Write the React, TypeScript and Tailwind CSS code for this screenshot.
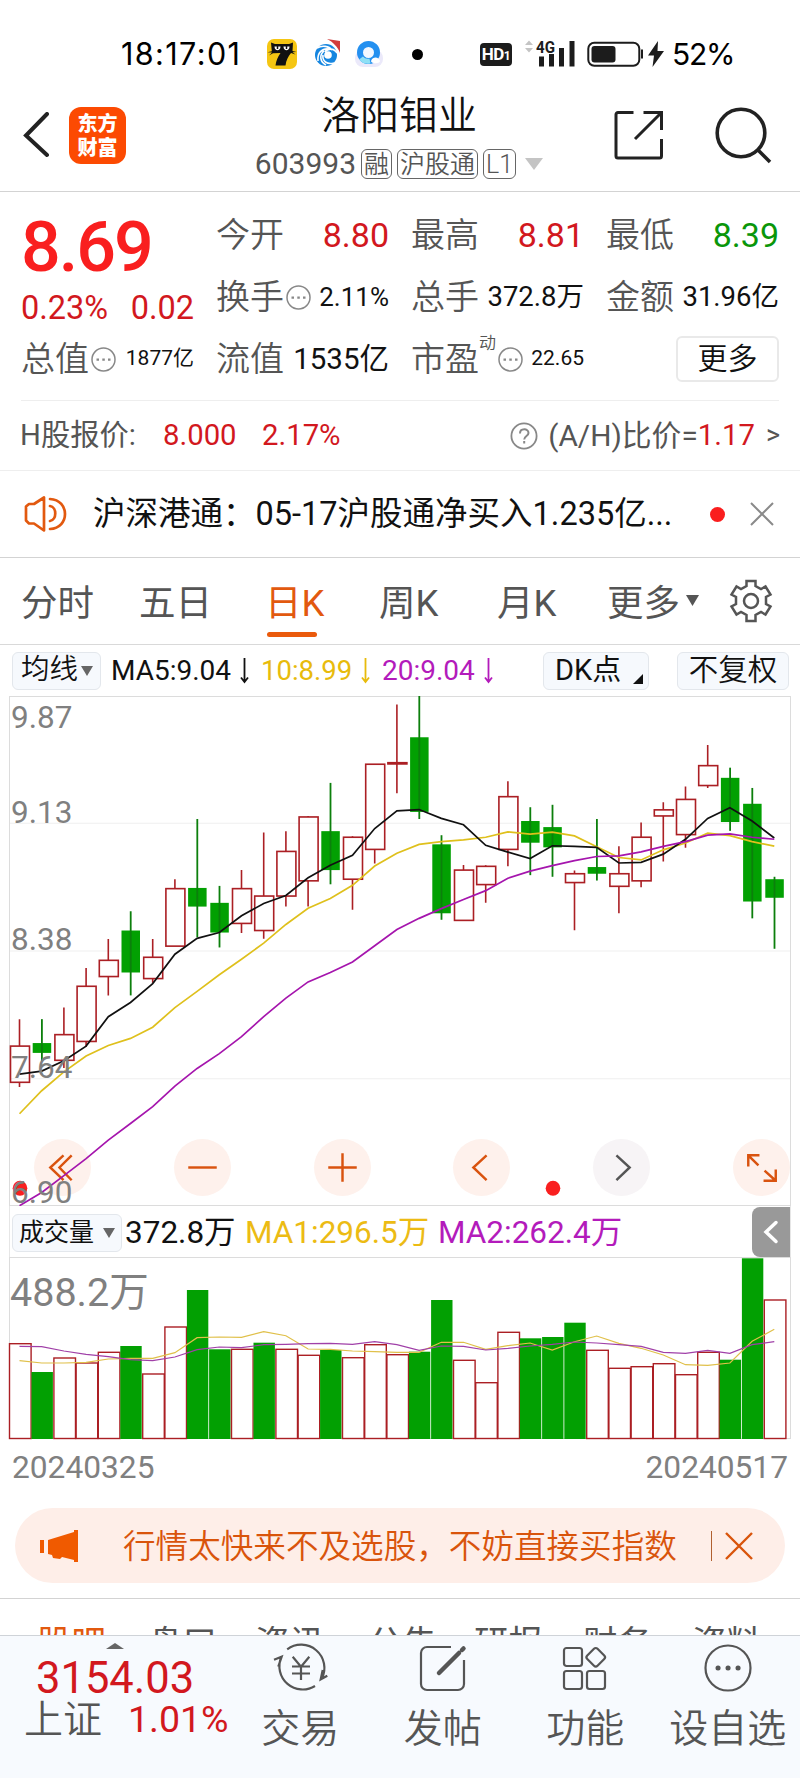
import type { ReactNode } from 'react'

interface Candle {
  up: boolean
  top: number
  bottom: number
  high: number
  low: number
}

const STEP = 22.2
const centerX = (i: number) => 19.5 + STEP * i

const c = (up: boolean, top: number, bottom: number, high: number, low: number): Candle => ({
  up,
  top,
  bottom,
  high,
  low,
})

const candles: Candle[] = [
  c(true, 1041.3, 1077, 1014.7, 1081.7),
  c(false, 1038.3, 1048, 1014.7, 1056),
  c(true, 1030, 1055.3, 1003.3, 1063),
  c(true, 982.3, 1036.7, 964.3, 1042),
  c(true, 956.7, 972.7, 935.7, 991.3),
  c(false, 927.3, 968.7, 908.3, 991.3),
  c(true, 953.7, 974.7, 935.7, 978.7),
  c(true, 886, 942.7, 876.7, 942.7),
  c(false, 885.3, 903.7, 817.3, 934),
  c(false, 900, 929.3, 883.3, 944),
  c(true, 886, 920.3, 867.7, 929.7),
  c(true, 893.3, 927.3, 830.7, 935.3),
  c(true, 849.3, 893.3, 829.3, 903.7),
  c(true, 815.3, 878.3, 814.3, 903.7),
  c(false, 829.3, 867.7, 781.7, 881.7),
  c(true, 835.3, 876.7, 834.3, 906.7),
  c(true, 763.3, 847.3, 763, 861.3),
  c(true, 761.8, 763, 704.3, 792),
  c(false, 736.7, 810.3, 696, 817.3),
  c(false, 842.3, 910.3, 833.3, 916.7),
  c(true, 867.7, 917.3, 862.7, 917.3),
  c(true, 864, 882, 863, 900),
  c(true, 795.3, 847.3, 780, 864),
  c(false, 819.3, 840.7, 805.7, 872.7),
  c(false, 825.3, 845.3, 803.3, 874.3),
  c(true, 871.3, 880, 868, 927),
  c(false, 864.7, 871.3, 817.3, 878),
  c(true, 871.3, 883.7, 844.3, 910.3),
  c(true, 835.3, 878.3, 820.7, 884.7),
  c(true, 808.3, 814.3, 800.7, 859.3),
  c(true, 798, 832.7, 785.3, 845.7),
  c(true, 764.7, 784.3, 744.3, 786.7),
  c(false, 776.7, 820.3, 766.7, 829),
  c(false, 802.3, 898.7, 786.7, 915.3),
  c(false, 876.7, 895, 874.3, 945.3),
]

const ma5 = [
  1069, 1066, 1055.7, 1041.3, 1012.3, 998.3, 979.7, 950.7, 935, 929.3, 912.7, 900.7, 892.7, 875.3,
  863, 853, 826.7, 809.3, 808, 816.7, 823, 843.3, 850, 856.3, 843.7, 844.3, 845.3, 860.7, 860, 852,
  837.3, 816.7, 806.3, 819.3, 836,
]
const ma10 = [
  1108, 1085.3, 1066.7, 1051, 1040.7, 1033.7, 1022.7, 1003.3, 987.3, 971, 955.7, 939.7, 921.3,
  905.3, 895.7, 882.7, 863.7, 851, 842.3, 839.7, 838, 835.3, 830, 832.3, 830.3, 834, 844.7, 855.3,
  857.7, 847.7, 841, 831.3, 833.7, 839.7, 844,
]
const ma20 = [
  1198.7, 1185.7, 1169, 1152.3, 1134, 1117.7, 1101, 1080.7, 1063.3, 1048.7, 1032, 1012.3, 994, 978,
  968.7, 958.3, 942.3, 926.3, 915.3, 905.7, 896.7, 888, 875.7, 868.7, 863.3, 858.3, 854.3, 853.7,
  849.7, 844.3, 839.7, 833.3, 832, 835.3, 837.3,
]

const volumes = [
  1343.7, 1372, 1358, 1363, 1352.3, 1346, 1374, 1327, 1290, 1349.3, 1349.3, 1342.7, 1349.3, 1355.3,
  1350, 1357.7, 1344.7, 1354.7, 1351.7, 1300, 1360.3, 1382.7, 1332.3, 1338.3, 1337, 1322.7, 1350.3,
  1368.3, 1366.7, 1363.7, 1374.7, 1352.3, 1359.7, 1258.3, 1300,
]
const volumeDown = [1, 5, 8, 9, 11, 14, 18, 19, 23, 24, 25, 32, 33]
const volMa1 = [
  1360.7, 1363, 1363, 1362.3, 1359, 1358.3, 1358.3, 1352.7, 1337.7, 1337, 1337.3, 1331.7, 1335.7,
  1349, 1349.3, 1351, 1351.7, 1352.3, 1352.3, 1342.3, 1342.3, 1349.3, 1345.7, 1343, 1350, 1341.7,
  1336, 1343.3, 1348.3, 1355, 1364.7, 1365.3, 1363, 1341.3, 1329.3,
]
const volMa2 = [
  1346.3, 1346.7, 1351, 1354.3, 1356.7, 1359.7, 1360.7, 1357, 1349.7, 1347, 1347.7, 1344.7, 1344.3,
  1343.7, 1343.3, 1344.3, 1341.7, 1344.7, 1350.3, 1346, 1346.3, 1350, 1348.3, 1346, 1344.3, 1342,
  1343, 1344.7, 1346.3, 1352.3, 1353.3, 1350.3, 1353.3, 1344.7, 1341.7,
]

const toPoints = (ys: number[]) => ys.map((y, i) => `${centerX(i).toFixed(1)},${y}`).join(' ')

function StatusBar() {
  return (
    <div className="flex h-[84px] items-center pt-6 pl-[121px] font-['Inter',sans-serif] text-black">
      <span className="w-[146px] text-[30.500px] leading-none tracking-[1.400px]">18:17:01</span>
      <svg className="h-[30px] w-[30px]" viewBox="0 0 30 30">
        <rect width="30" height="30" rx="7" fill="#f5c613" />
        <path
          d="M4 3.500 8 5h14l4-1.500-.5 8.500 4 1-4 .3 3 2.200-4.500-1.500c-3 4-4.800 7-5.500 12.500H8.500c.7-5 2.200-8.500 5-12.500L6 14.300l-4 2.200 3-3-4.500-.3 4.300-1z"
          fill="#111"
        />
        <path d="M7.500 7.500c0 5 6 5 6 0M16.500 7.500c0 5 6 5 6 0" fill="#fff" />
        <path d="M10.500 6v4M19.500 6v4" stroke="#111" strokeWidth="1.500" />
      </svg>
      <svg className="ml-4 h-[30px] w-[30px]" viewBox="0 0 30 30">
        <circle cx="13" cy="16" r="11" fill="#1686e0" />
        <path
          d="M4 9c5-3 12-2 15 2M5 22c-1-8 4-13 11-12M13 26c-6-3-7-10-2-14M21 24c-7 2-12-2-11-8M24 14c-3-5-9-5-12-1"
          fill="none"
          stroke="#fff"
          strokeWidth="1.600"
        />
        <circle cx="15" cy="16" r="3.800" fill="#fff" />
        <path d="m14 0 13 2v12C25 8 20 3 14 0z" fill="#d23b3b" />
      </svg>
      <svg className="ml-[11px] h-[30px] w-[30px]" viewBox="0 0 30 30">
        <rect x="1" y="11" width="28" height="17" rx="8" fill="#ebe9fa" />
        <circle cx="14.500" cy="13.500" r="8.500" fill="#f4f8ff" stroke="#2490f0" strokeWidth="6" />
        <path d="M7 19a9 9 0 0 0 9 3" stroke="#8fe0f5" strokeWidth="5" fill="none" />
        <path d="M17 22c2-5 8-4 9 0 0 3-9 3-9 0z" fill="#fff" />
      </svg>
      <span className="ml-[28px] h-[11px] w-[11px] rounded-full bg-black" />
      <span className="ml-[57px] flex h-[23px] w-8 items-center justify-center rounded bg-[#1c1c1c] font-['Roboto',sans-serif] text-[17px] leading-none font-bold tracking-[-0.5px] text-white">
        HD<span className="pt-1 text-[12px]">1</span>
      </span>
      <svg className="ml-[13px] h-[30px] w-[50px]" viewBox="0 0 50 30">
        <path d="m0 6 4-4.500L8 6zM0 9l4 4.500L8 9z" fill="#c4c4c4" />
        <text
          x="11"
          y="13.500"
          fontFamily="Roboto, sans-serif"
          fontSize="16"
          fontWeight="700"
          textLength="19"
          lengthAdjust="spacingAndGlyphs"
          fill="#1c1c1c"
        >
          4G
        </text>
        <path d="M14 17.500h5v10h-5zM24 15h5v12.500h-5zM34 9h5v18.500h-5zM44.500 2h5v25.500h-5z" fill="#1c1c1c" />
      </svg>
      <svg className="ml-3 h-[28px] w-[57px]" viewBox="0 0 57 28">
        <rect x="1.300" y="2.800" width="51" height="23" rx="6" fill="none" stroke="#1c1c1c" strokeWidth="2" />
        <rect x="4.500" y="6" width="24" height="16.500" rx="3" fill="#1c1c1c" />
        <path d="M55 9.500v9" stroke="#1c1c1c" strokeWidth="2" />
      </svg>
      <svg className="ml-1 h-[26px] w-[16px]" viewBox="0 0 16 26">
        <path d="M10 0 0 14.500h6L4.500 26 16 10H9.500z" fill="#1c1c1c" />
      </svg>
      <span className="ml-2 text-[30px] leading-none tracking-[-1.300px]">52%</span>
    </div>
  )
}

function Tag({ children }: { children: ReactNode }) {
  return (
    <span className="flex h-[30px] items-center rounded-md border border-[#666] px-[2px] text-[25px] leading-none font-[350] text-[#555]">
      {children}
    </span>
  )
}

function Header() {
  return (
    <div className="flex h-[108px] border-b border-[#d3d3d3] pl-[23px]">
      <svg className="mt-[28px] h-[46px] w-[26px]" viewBox="0 0 26 46">
        <path d="M24 2 3 23.500 24 43" fill="none" stroke="#222" strokeWidth="4" strokeLinecap="round" />
      </svg>
      <div className="mt-[23px] ml-5 flex h-[57px] w-[57px] flex-col items-center justify-center rounded-xl bg-[#fc4a02] text-[20px] leading-[24px] font-black text-white">
        <span>东方</span>
        <span>财富</span>
      </div>
      <div className="flex w-[488px] flex-col items-center pl-[58px]">
        <h1 className="mt-[9px] text-[39px] leading-[46px] font-[350] text-[#111]">洛阳钼业</h1>
        <div className="mt-[10px] flex items-center gap-[5px]">
          <span className="text-[30px] leading-none text-[#555]">603993</span>
          <Tag>融</Tag>
          <Tag>沪股通</Tag>
          <Tag>L1</Tag>
          <svg className="ml-1 h-[12px] w-[18px]" viewBox="0 0 18 12">
            <path d="M0 0h18L9 12z" fill="#c4c4c4" />
          </svg>
        </div>
      </div>
      <svg className="mt-[26px] h-[50px] w-[50px]" viewBox="0 0 50 50" fill="none" stroke="#222" strokeWidth="3">
        <path d="M19.500 2.500H4a2 2 0 0 0-2 2V46a2 2 0 0 0 2 2h41.500a2 2 0 0 0 2-2V29M29.500 2.500h18V20M47.500 2.500 21 29" />
      </svg>
      <svg className="mt-[22px] ml-[51px] h-[58px] w-[58px]" viewBox="0 0 58 58" fill="none" stroke="#222" strokeWidth="3.600">
        <circle cx="26" cy="27" r="23.800" />
        <path d="m43 44 12 12" />
      </svg>
    </div>
  )
}

function Dots() {
  return (
    <svg className="ml-[2px] h-[25px] w-[25px]" viewBox="0 0 25 25">
      <circle cx="12.500" cy="12.500" r="11.500" fill="none" stroke="#888" strokeWidth="1.500" />
      <path d="M5.500 11.500H8v2.200H5.500zM11.300 11.500h2.500v2.200h-2.500zM17 11.500h2.500v2.200H17z" fill="#888" />
    </svg>
  )
}

function Cell({ label, children }: { label: ReactNode; children: ReactNode }) {
  return (
    <div className="flex h-[62px] items-center justify-between whitespace-nowrap">
      <span className="flex items-center text-[34px] leading-none font-[350] text-[#555]">{label}</span>
      {children}
    </div>
  )
}

function Quote() {
  return (
    <>
      <div className="mr-[21px] ml-[21px] grid h-[209px] grid-cols-4 content-start gap-x-[22px] border-b border-[#eee] pt-[12px]">
        <div className="row-span-2 h-[124px]">
          <div className="pt-[10px] text-[70px] leading-[66px] font-medium tracking-[-2px] text-[#f91f1f]">8.69</div>
          <div className="flex justify-between pt-[9px] text-[32.500px] leading-[38px] text-[#d2181e]">
            <span>0.23%</span>
            <span>0.02</span>
          </div>
        </div>
        <Cell label="今开">
          <span className="text-[34px] text-[#d2181e]">8.80</span>
        </Cell>
        <Cell label="最高">
          <span className="text-[34px] text-[#d2181e]">8.81</span>
        </Cell>
        <Cell label="最低">
          <span className="text-[34px] text-[#0a960a]">8.39</span>
        </Cell>
        <Cell label={<>换手<Dots /></>}>
          <span className="text-[26px] text-[#111]">2.11%</span>
        </Cell>
        <Cell label="总手">
          <span className="text-[27.500px] text-[#111]">372.8万</span>
        </Cell>
        <Cell label="金额">
          <span className="text-[27.500px] text-[#111]">31.96亿</span>
        </Cell>
        <Cell label={<>总值<Dots /></>}>
          <span className="text-[21px] text-[#111]">1877亿</span>
        </Cell>
        <Cell label="流值">
          <span className="text-[29.500px] text-[#111]">1535亿</span>
        </Cell>
        <Cell
          label={
            <>
              市盈<span className="-mt-8 text-[17px]">动</span>
              <Dots />
            </>
          }
        >
          <span className="text-[21px] text-[#111]">22.65</span>
        </Cell>
        <div className="flex h-[62px] items-center justify-end">
          <button className="h-[46px] w-[103px] rounded-md border-2 border-[#e9e9e9] text-[30px] leading-none font-[350] text-[#111]">
            更多
          </button>
        </div>
      </div>
      <div className="flex h-[70px] items-center border-b border-[#eee] px-[20px] text-[29.300px] leading-none whitespace-nowrap text-[#555]">
        <span className="w-[143px]">H股报价:</span>
        <span className="w-[99px] text-[#d2181e]">8.000</span>
        <span className="text-[#d2181e]">2.17%</span>
        <svg className="ml-auto h-[28px] w-[28px]" viewBox="0 0 28 28" fill="none" stroke="#888">
          <circle cx="14" cy="14" r="12.600" strokeWidth="1.800" />
          <path d="M10 11.500c0-5.500 8.500-5.500 8.500-.5 0 3-4.300 3-4.300 6.500M14.200 19v2.500" strokeWidth="2" />
        </svg>
        <span className="ml-[10px] text-[29.800px]">(A/H)比价=</span>
        <span className="text-[#d2181e]">1.17</span>
        <span className="ml-[11px] text-[27px]">&gt;</span>
      </div>
    </>
  )
}

function Notice() {
  return (
    <div className="flex h-[87px] items-center border-b border-[#d3d3d3] pl-[24px] whitespace-nowrap">
      <svg className="h-[38px] w-[43px]" viewBox="0 0 43 38" fill="none" stroke="#e2590f" strokeWidth="2.700">
        <path d="M20 2.500v33L10 28.500H5l-3-3V11.500l3-2.500h5z" strokeLinejoin="round" />
        <path d="M26 11c7 1 7 14 0 15M26 4c20 1 20 29 0 30" strokeLinecap="round" />
      </svg>
      <span className="ml-[26px] w-[617px] text-[32.500px] text-[#111]">沪深港通：05-17沪股通净买入1.235亿...</span>
      <span className="h-[15px] w-[15px] rounded-full bg-[#fa1e1e]" />
      <svg className="ml-[25px] h-[24px] w-[24px]" viewBox="0 0 24 24">
        <path d="m1 1 22 22M23 1 1 23" stroke="#8a8a8a" strokeWidth="2" />
      </svg>
    </div>
  )
}

function PeriodTabs() {
  return (
    <div className="flex h-[87px] border-b border-[#d9d9d9] pl-[21px] text-[36.500px] leading-[91px] whitespace-nowrap text-[#555]">
      <span className="w-[118px]">分时</span>
      <span className="w-[126px]">五日</span>
      <span className="relative w-[114px] text-[#e2590f]">
        日K
        <i className="absolute bottom-[7px] left-[2px] h-[5px] w-[50px] rounded-full bg-[#ea5a0c]" />
      </span>
      <span className="w-[118px]">周K</span>
      <span className="w-[110px]">月K</span>
      <span className="w-[79px]">更多</span>
      <svg className="mt-[37px] h-[12px] w-[13px]" viewBox="0 0 13 12">
        <path d="M0 0h13L6.500 11z" fill="#555" />
      </svg>
      <svg className="mt-[21px] ml-[30px] h-[44px] w-[44px]" viewBox="0 0 44 44" fill="none" stroke="#555" strokeWidth="2.500">
        <circle cx="22" cy="22" r="7" />
        <path d="M17.500 2h9v5l5.500 3 4.500-2.500 5 8-4.500 2.500v7l4.500 2.500-5 8L32 33l-5.500 3v6h-9v-6L12 33l-4.500 2.500-5-8L7 25v-7l-4.500-2.500 5-8L12 10l5.500-3z" />
      </svg>
    </div>
  )
}

function DownArrow() {
  return (
    <svg className="mx-[9px] h-[26px] w-[9px]" viewBox="0 0 9 26" fill="none" stroke="currentColor" strokeWidth="1.800">
      <path d="M4.500 0v24M1 19.500l3.500 4.500L8 19.500" />
    </svg>
  )
}

const chip =
  'flex h-[38px] items-center rounded-md border border-[#e3e7ec] bg-[#f6f9fd] text-[#111] leading-none'

function IndicatorRow() {
  return (
    <div className="flex h-[51px] items-center pl-3 text-[28px] whitespace-nowrap">
      <span className={`${chip} w-[89px] pl-2 text-[28.500px] font-[350]`}>
        均线
        <svg className="ml-[3px] h-[10px] w-[12px]" viewBox="0 0 12 10">
          <path d="M0 0h12L6 10z" fill="#666" />
        </svg>
      </span>
      <span className="flex w-[160px] items-center pl-[10px] text-[#111]">
        MA5:9.04
        <DownArrow />
      </span>
      <span className="flex w-[121px] items-center text-[27.500px] text-[#e8bb0c]">
        10:8.99
        <DownArrow />
      </span>
      <span className="flex w-[161px] items-center text-[#b31bbb]">
        20:9.04
        <DownArrow />
      </span>
      <span className={`${chip} w-[106px] justify-between pr-[5px] pl-[11px] text-[29px]`}>
        DK点
        <svg className="mt-4 h-[10px] w-[10px]" viewBox="0 0 10 10">
          <path d="M10 0v10H0z" fill="#111" />
        </svg>
      </span>
      <span className={`${chip} ml-[28px] w-[112px] justify-center text-[29.500px] font-[350]`}>不复权</span>
    </div>
  )
}

const tools: { tone: string; d: string }[] = [
  { tone: 'bg-[#fef1ec] text-[#d9530f]', d: 'M29 16 16 28l13 12.500M37 16 25 28l12 12.500' },
  { tone: 'bg-[#fef1ec] text-[#d9530f]', d: 'M14 28h28' },
  { tone: 'bg-[#fef1ec] text-[#d9530f]', d: 'M14 28h28M28 14v28' },
  { tone: 'bg-[#fef1ec] text-[#d9530f]', d: 'M33 16 20 28l13 12.500' },
  { tone: 'bg-[#f7f4f6] text-[#555]', d: 'M23 16l13 12-13 12.500' },
  { tone: 'bg-[#fef1ec] text-[#d9530f]', d: 'M25 26 15 16m0 11V16h11M31 31l11 10M42 30v11H30' },
]

function PriceChart() {
  return (
    <div className="relative h-[509px]">
      <div className="absolute top-[443px] left-[34px] flex w-[756px] justify-between">
        {tools.map((tool) => (
          <button key={tool.d} className={`h-[57px] w-[57px] rounded-full ${tool.tone}`}>
            <svg viewBox="0 0 56 56" fill="none" stroke="currentColor" strokeWidth="2.400">
              <path d={tool.d} />
            </svg>
          </button>
        ))}
      </div>
      <svg className="absolute inset-0 h-[510px] w-[800px]" viewBox="0 696 800 503" preserveAspectRatio="none">
        <path d="M9 821.500h781M9 947.500h781M9 1073.500h781" stroke="#f0f0f0" />
        <rect x="9.500" y="696.500" width="781" height="502" fill="none" stroke="#dcdcdc" />
        {candles.map((k, i) => {
          const x = centerX(i)
          if (!k.up) {
            return (
              <g key={i} fill="#02a002">
                <rect x={x - 9} y={k.top} width="18.500" height={k.bottom - k.top} />
                <rect x={x - 0.7} y={k.high} width="1.800" height={k.low - k.high} fill="#0c7f0c" />
              </g>
            )
          }
          return (
            <g key={i} fill="none" stroke="#ab1f24" strokeWidth="1.600">
              <path d={`M${x} ${k.high}V${k.top}M${x} ${k.bottom}V${k.low}`} />
              <rect x={x - 9} y={k.top} width="19" height={k.bottom - k.top} />
            </g>
          )
        })}
        <g fill="none" strokeWidth="1.700">
          <polyline points={toPoints(ma10)} stroke="#dfc01c" />
          <polyline points={toPoints(ma5)} stroke="#111" />
          <polyline points={toPoints(ma20)} stroke="#a515ad" />
        </g>
        <circle cx="20" cy="1181.500" r="7.300" fill="#f91f1f" />
        <circle cx="553" cy="1181.500" r="7.300" fill="#f91f1f" />
        <g fontFamily="Roboto, sans-serif" fontSize="31.500" fill="#808080">
          <text x="11" y="727.500">9.87</text>
          <text x="11" y="821.500">9.13</text>
          <text x="11" y="947">8.38</text>
          <text x="11" y="1073">7.64</text>
          <text x="11" y="1196">6.90</text>
        </g>
      </svg>
    </div>
  )
}

function VolumeChart() {
  return (
    <>
      <div className="mr-[9px] ml-[9px] flex h-[52px] items-center border-x border-[#e6e6e6] pl-[2px] text-[31.500px] whitespace-nowrap">
        <span className={`${chip} mt-[3px] w-[110px] justify-center gap-[9px]`}>
          <span className="text-[25px]">成交量</span>
          <svg className="h-[10px] w-[12px]" viewBox="0 0 12 10">
            <path d="M0 0h12L6 10z" fill="#666" />
          </svg>
        </span>
        <span className="w-[123px] pt-[3px] pl-[3px] text-[#111]">372.8万</span>
        <span className="w-[193px] pt-[3px] text-[#ecbb14]">MA1:296.5万</span>
        <span className="pt-[3px] text-[#b31bbb]">MA2:262.4万</span>
        <span className="mt-[2px] ml-auto flex h-[50px] w-[38px] items-center justify-center rounded-l-lg bg-[#999]">
          <svg className="h-[24px] w-[16px]" viewBox="0 0 16 24">
            <path d="M13 2.500 3 12l10 9.500" fill="none" stroke="#fff" strokeWidth="3.500" strokeLinecap="round" />
          </svg>
        </span>
      </div>
      <svg className="block h-[183px] w-[800px]" viewBox="0 1257 800 183">
        <rect x="9.500" y="1257.500" width="781" height="181" fill="none" stroke="#dcdcdc" />
        {volumes.map((top, i) => {
          const x = 9.5 + STEP * i
          return volumeDown.includes(i) ? (
            <rect key={i} x={x - 0.2} y={top} width="21.400" height={1439 - top} fill="#02a002" />
          ) : (
            <rect key={i} x={x} y={top} width="21.600" height={1438.5 - top} fill="none" stroke="#ab1f24" strokeWidth="1.400" />
          )
        })}
        <polyline points={toPoints(volMa1)} fill="none" stroke="#e0c04a" strokeWidth="1.200" />
        <polyline points={toPoints(volMa2)} fill="none" stroke="#a040a8" strokeWidth="1.200" />
        <text x="10" y="1306" fontFamily="Roboto, 'Noto Sans CJK SC', sans-serif" fontSize="39.500" fill="#808080">
          488.2万
        </text>
      </svg>
      <div className="flex h-[56px] items-center justify-between pr-[12px] pl-[12px] text-[31.700px] text-[#808080]">
        <span>20240325</span>
        <span>20240517</span>
      </div>
    </>
  )
}

function Banner() {
  return (
    <div className="mx-[15px] mt-[12px] flex h-[75px] items-center rounded-full bg-[#feeee8] pl-[25px] whitespace-nowrap">
      <svg className="h-[34px] w-[39px]" viewBox="0 0 39 34">
        <path d="M0 11h4v13H0zM8 11 34 3V1h4v32h-4v-2l-12-3-2 2-7-1-1-3-4-1z" fill="#f05a00" />
      </svg>
      <span className="ml-[44px] w-[588px] pt-[3px] text-[32.600px] font-[350] text-[#d9540b]">
        行情太快来不及选股，不妨直接买指数
      </span>
      <span className="h-[30px] w-px bg-[#b06030]" />
      <svg className="ml-[13px] h-[28px] w-[28px]" viewBox="0 0 28 28">
        <path d="m1 1 26 26M27 1 1 27" stroke="#d9540b" strokeWidth="2.400" />
      </svg>
    </div>
  )
}

function InfoTabs() {
  return (
    <div className="mt-[15px] flex h-[37px] overflow-hidden border-t border-[#d3d3d3] pt-[24px] pl-[37px] text-[34.500px] leading-[40px] whitespace-nowrap text-[#555]">
      <span className="w-[111px] text-[#e2590f]">股吧</span>
      <span className="w-[107px]">盘口</span>
      <span className="w-[113px]">资讯</span>
      <span className="w-[106px]">公告</span>
      <span className="w-[109px]">研报</span>
      <span className="w-[109px]">财务</span>
      <span>资料</span>
    </div>
  )
}

function NavItem({ label, children }: { label: string; children: ReactNode }) {
  return (
    <div className="flex w-[142.500px] flex-col items-center pt-[7px]">
      <svg className="h-[50px] w-[56px]" viewBox="0 0 56 50" fill="none" stroke="#555" strokeWidth="2.200">
        {children}
      </svg>
      <span className="mt-[15px] text-[39px] leading-[42px] font-[350] whitespace-nowrap text-[#555]">{label}</span>
    </div>
  )
}

function BottomBar() {
  return (
    <div className="flex h-[143px] border-t border-[#cfd3d8] bg-[#f7fafe]">
      <div className="w-[229px] whitespace-nowrap">
        <svg className="mt-[7px] ml-[106px] h-[6px] w-[18px]" viewBox="0 0 18 6">
          <path d="M0 6h18L9 0z" fill="#666" />
        </svg>
        <div className="mt-[7px] pl-[36px] text-[43.500px] leading-[46px] text-[#d2181e]">3154.03</div>
        <div className="-mt-[6px] flex items-center pl-[24px] leading-[44px]">
          <span className="w-[104px] pt-[2px] text-[39px] font-[350] text-[#555]">上证</span>
          <span className="text-[37.500px] text-[#d2181e]">1.01%</span>
        </div>
      </div>
      <NavItem label="交易">
        <path d="M15.200 6.300a23.300 23.300 0 0 1 34.600 29.400M43 43A23.300 23.300 0 0 1 9.300 14M2 16.700l7.700-3-3.400 10M55.300 32.700l-6.600 3.600 2-9.300" />
        <path d="m20.700 13.700 8.300 10 8.300-10M20 23.500h18M20 30.500h18M29 23v14" />
      </NavItem>
      <NavItem label="发帖">
        <path d="M36 4H12a6 6 0 0 0-6 6v31a6 6 0 0 0 6 6h31a6 6 0 0 0 6-6V17" />
        <path d="m24 30 20-20M47 7l1.500-1.500" strokeWidth="4.500" strokeLinecap="round" />
      </NavItem>
      <NavItem label="功能">
        <rect x="7" y="5" width="18" height="18" rx="2.500" />
        <rect x="7" y="28" width="18" height="18" rx="2.500" />
        <rect x="30" y="28" width="18" height="18" rx="2.500" />
        <rect x="31.500" y="7" width="14.500" height="14.500" rx="2.500" transform="rotate(45 38.750 14.250)" />
      </NavItem>
      <NavItem label="设自选">
        <circle cx="28" cy="25" r="22.500" />
        <path d="M18 25h.1M28 25h.1M38 25h.1" strokeWidth="5" strokeLinecap="round" />
      </NavItem>
    </div>
  )
}

export default function App() {
  return (
    <div className="h-[1778px] w-[800px] overflow-hidden bg-white font-['Roboto','Noto_Sans_CJK_SC',sans-serif]">
      <StatusBar />
      <Header />
      <Quote />
      <Notice />
      <PeriodTabs />
      <IndicatorRow />
      <PriceChart />
      <VolumeChart />
      <Banner />
      <InfoTabs />
      <BottomBar />
    </div>
  )
}
